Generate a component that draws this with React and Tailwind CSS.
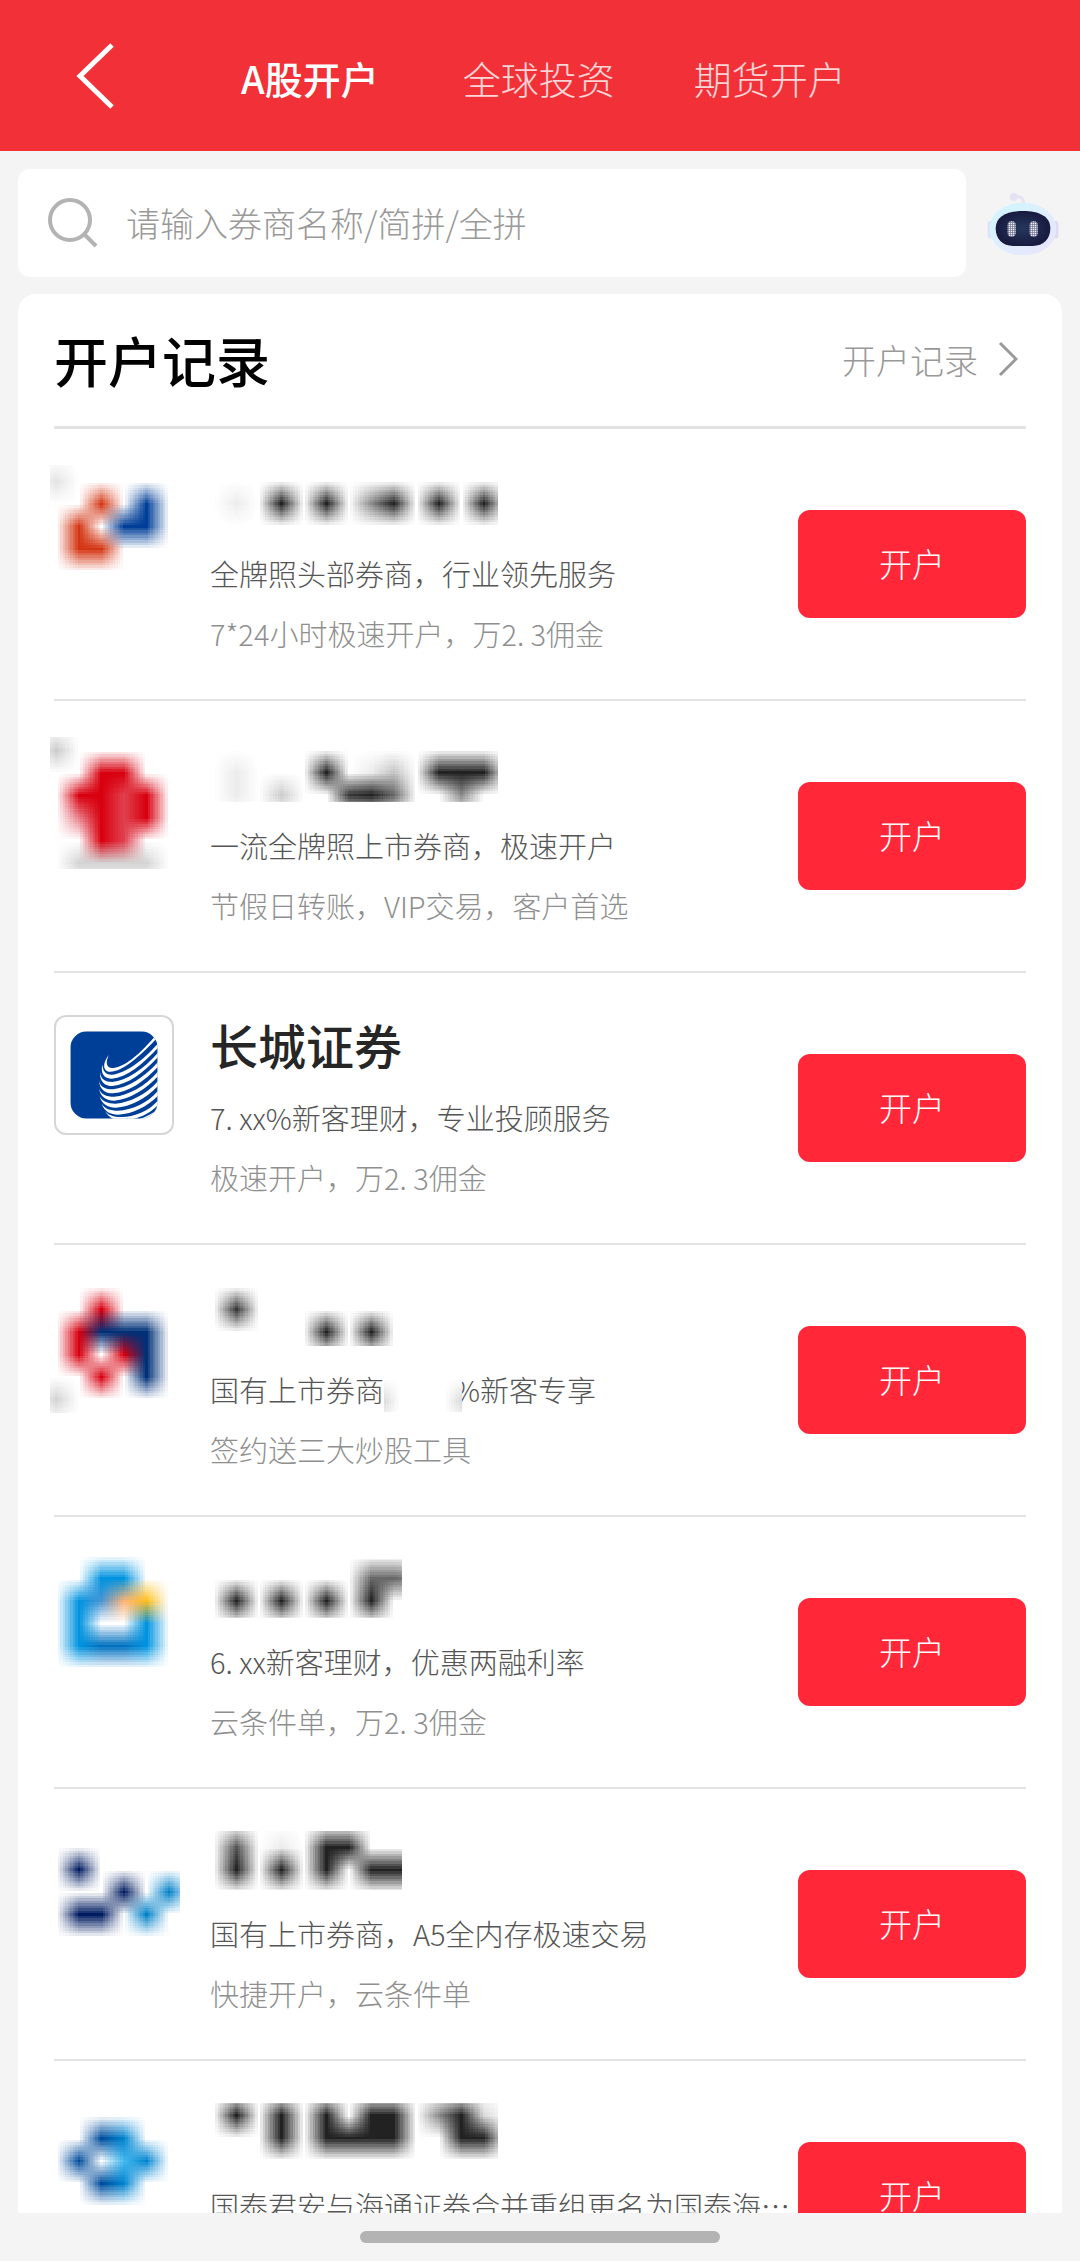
import { useState } from 'react';

const TABS = ['A股开户', '全球投资', '期货开户'];

const INK = {
  k: '#222222', 3: '#383838', 5: '#555555', 6: '#686868', 8: '#8c8c8c',
  b: '#c4c4c4', c: '#cccccc', d: '#dadada', e: '#ececec',
};

// Every broker has a logo and a name; hidden ones are drawn as coarse mosaic cells.
const BROKERS = [
  {
    id: 1,
    logo: {
      top: 5,
      rows: ['e.....', '..r.b.', '.r.bb.', '.rr...'],
      palette: { e: '#e4e4e4', r: '#d43614', b: '#003f98' },
    },
    name: { top: 21, chars: 6, rows: ['e.k.k.8k.k.k'] },
    intro: '全牌照头部券商，行业领先服务',
    note: '7*24小时极速开户，万2. 3佣金',
  },
  {
    id: 2,
    logo: {
      top: 2,
      rows: ['c.....', '..rr..', '.rrpr.', '.qrpr.', '..rp..', '.dddd.'],
      palette: { c: '#cccccc', d: '#d4d4d4', r: '#d8000f', p: '#e0404e', q: '#e8808a' },
    },
    name: { top: 18, chars: 6, rows: ['e...k.eb.kkk', 'e.c..3k6..8.'] },
    intro: '一流全牌照上市券商，极速开户',
    note: '节假日转账，VIP交易，客户首选',
  },
  {
    id: 3,
    title: '长城证券',
    intro: '7. xx%新客理财，专业投顾服务',
    note: '极速开户，万2. 3佣金',
  },
  {
    id: 4,
    logo: {
      top: 17,
      rows: ['..r...', '.rnnn.', '.r.rn.', '..r.n.', 'd.....'],
      palette: { d: '#d4d4d4', r: '#d8000f', n: '#003078' },
    },
    name: { top: 11, chars: 4, rows: ['3........', '....k.k..'] },
    intro: '国有上市券商',
    introEnd: '%新客专享',
    note: '签约送三大炒股工具',
  },
  {
    id: 5,
    logo: {
      top: 14,
      rows: ['..bb..', '.bmoy.', '.b..b.', '.bddb.'],
      palette: { b: '#0094e0', m: '#4a94d4', o: '#ffb478', y: '#ffbe1c', d: '#0070c0' },
    },
    name: { top: 8, chars: 4, rows: ['......668', 'k.k.k.k..'] },
    intro: '6. xx新客理财，优惠两融利率',
    note: '云条件单，万2. 3佣金',
  },
  {
    id: 6,
    logo: {
      top: 33,
      rows: ['.n....', '...n.l', '.nn.l.'],
      palette: { n: '#001c60', l: '#0080c8' },
    },
    name: { top: 5, chars: 4, rows: ['5.e.kk...', 'k.k.k.kkk'] },
    intro: '国有上市券商，A5全内存极速交易',
    note: '快捷开户，云条件单',
  },
  {
    id: 7,
    logo: {
      top: 30,
      rows: ['..nb..', '.n.lb.', '..nb..'],
      palette: { n: '#004c9c', b: '#0084d0', l: '#45baf0' },
    },
    name: { top: 1, chars: 6, rows: ['k.k.k.kk.8kd', '..k.kkkk..kk'] },
    intro: '国泰君安与海通证券合并重组更名为国泰海通证券股份有限公司',
    note: '极速开户，万2. 3佣金',
  },
];

const CELL = 22.5;
const STEPS = 9;

const toRgb = (hex) => [1, 3, 5].map((i) => parseInt(hex.slice(i, i + 2), 16));

// Blends the four nearest cells, so the mosaic fades smoothly between their centres.
const blend = (rows, palette, x, y) => {
  const x0 = Math.floor(x);
  const y0 = Math.floor(y);
  const fx = x - x0;
  const fy = y - y0;
  const cell = (cx, cy) => toRgb(palette[rows[cy]?.[cx]] || '#ffffff');
  const a = cell(x0, y0);
  const b = cell(x0 + 1, y0);
  const c = cell(x0, y0 + 1);
  const d = cell(x0 + 1, y0 + 1);
  return a.map((_, i) =>
    Math.round((a[i] * (1 - fx) + b[i] * fx) * (1 - fy) + (c[i] * (1 - fx) + d[i] * fx) * fy)
  );
};

const Mosaic = ({ rows, palette, left, top, width, height, className }) => {
  const size = CELL / STEPS;
  const tiles = [];

  for (let j = -STEPS; j < (rows.length + 1) * STEPS; j++) {
    for (let i = -STEPS; i < (rows[0].length + 1) * STEPS; i++) {
      const rgb = blend(rows, palette, (i + 0.5) / STEPS - 0.5, (j + 0.5) / STEPS - 0.5);
      if (Math.min(...rgb) < 254) {
        tiles.push(
          <rect
            key={`${i}-${j}`}
            x={left + i * size}
            y={top + j * size}
            width={size}
            height={size}
            fill={`rgb(${rgb.join(',')})`}
          />
        );
      }
    }
  }

  return (
    <svg
      className={className}
      width={width}
      height={height}
      viewBox={`0 0 ${width} ${height}`}
      shapeRendering="crispEdges"
      aria-hidden="true"
    >
      {tiles}
    </svg>
  );
};

const GreatWallLogo = () => (
  <svg className="w-[88px] h-[88px]" viewBox="91 91 264 264" aria-hidden="true">
    <clipPath id="wall-tile">
      <rect x="92" y="92" width="262" height="262" rx="50" />
    </clipPath>
    <g clipPath="url(#wall-tile)">
      <rect x="92" y="92" width="262" height="262" fill="#003f98" />
      <g fill="#ffffff">
        <path d="M208 162C192 182 186 206 206 213C244 218 300 168 356 108V94C300 164 250 202 216 202C198 200 198 182 208 162Z" />
        <path d="M188 192C182 220 194 234 216 234C262 230 310 190 356 140V127C312 178 258 218 216 222C198 222 190 212 188 192Z" />
        <path d="M181 215C180 244 196 256 218 256C264 252 312 216 356 168V155C314 204 260 240 218 244C196 244 184 236 181 215Z" />
        <path d="M178 240C180 266 196 278 220 278C268 274 314 242 356 197V183C316 230 262 262 220 266C196 266 182 258 178 240Z" />
        <path d="M178 264C182 288 200 300 224 300C270 296 316 268 356 226V211C318 256 266 284 224 288C198 288 184 280 178 264Z" />
        <path d="M180 287C186 310 204 321 228 321C274 318 318 294 356 255V240C320 282 270 306 228 309C202 309 188 302 180 287Z" />
        <path d="M186 309C194 332 212 342 236 342C280 339 322 318 356 284V269C324 308 276 328 236 330C210 330 196 324 186 309Z" />
        <path d="M196 331C206 350 224 360 246 360C288 358 328 342 356 312V298C328 332 284 348 246 349C220 349 206 344 196 331Z" />
        <path d="M290 358C318 350 340 338 356 325V358Z" />
      </g>
    </g>
  </svg>
);

const Robot = () => (
  <svg className="w-[72px] h-[64px]" viewBox="0 0 216 192" aria-hidden="true">
    <defs>
      <linearGradient id="robot-shell" x1="0" y1="0" x2="1" y2="1">
        <stop offset="0" stopColor="#ccf6ff" />
        <stop offset="0.5" stopColor="#dfeeff" />
        <stop offset="1" stopColor="#eae2fb" />
      </linearGradient>
      <radialGradient id="robot-face">
        <stop offset="0" stopColor="#24385c" />
        <stop offset="1" stopColor="#191a40" />
      </radialGradient>
      <pattern id="robot-eye" width="6" height="6" patternUnits="userSpaceOnUse">
        <rect width="6" height="6" fill="#6d7090" />
        <rect width="4" height="4" fill="#f2f2f7" />
      </pattern>
    </defs>
    <path d="M80 18C100 12 110 22 110 40" fill="none" stroke="#e4e2f3" strokeWidth="9" />
    <circle cx="80" cy="18" r="12" fill="#e4e2f3" />
    <rect x="2" y="90" width="20" height="52" rx="8" fill="#dde2f6" />
    <rect x="194" y="90" width="20" height="52" rx="8" fill="#dcdaf5" />
    <rect x="8" y="36" width="200" height="156" rx="94" ry="76" fill="url(#robot-shell)" />
    <path
      d="M108 60C156 60 190 76 190 112C190 146 168 165 138 165H78C48 165 26 146 26 112C26 76 60 60 108 60Z"
      fill="url(#robot-face)"
    />
    <rect x="62" y="91" width="24" height="46" rx="11" fill="url(#robot-eye)" />
    <rect x="128" y="91" width="24" height="46" rx="11" fill="url(#robot-eye)" />
  </svg>
);

const BrokerRow = ({ broker }) => (
  <li className="flex items-start h-[272px] border-b-2 border-[#e3e3e3]">
    <div className="w-[156px] shrink-0">
      {broker.logo ? (
        <Mosaic
          className="mt-9 -ml-1"
          rows={broker.logo.rows}
          palette={broker.logo.palette}
          left={-5}
          top={broker.logo.top}
          width={130}
          height={132}
        />
      ) : (
        <div className="mt-[42px] w-[120px] h-[120px] flex items-center justify-center rounded-xl border-2 border-[#d6d6d6]">
          <GreatWallLogo />
        </div>
      )}
    </div>

    <div className="flex-1 min-w-0 pt-[42px]">
      <h3 className="h-[60px] mb-3 text-[48px] leading-[58px] font-medium text-[#262626]">
        {broker.title || (
          <Mosaic
            rows={broker.name.rows}
            palette={INK}
            left={15}
            top={broker.name.top}
            width={broker.name.chars * 48}
            height={59}
          />
        )}
      </h3>
      <p className="text-[29px] leading-[60px] text-[#555555] truncate">
        {broker.intro}
        {broker.introEnd && (
          <>
            <Mosaic
              className="relative inline-block align-middle -mr-2 bg-white"
              rows={['d...d']}
              palette={{ d: '#cccccc' }}
              left={-18}
              top={14}
              width={78}
              height={36}
            />
            {broker.introEnd}
          </>
        )}
      </p>
      <p className="text-[29px] leading-[60px] text-[#8f8f8f] truncate">{broker.note}</p>
    </div>

    <button
      type="button"
      className="mt-[81px] w-[228px] h-[108px] shrink-0 rounded-xl bg-[#ff2738] text-[33px] text-white"
    >
      开户
    </button>
  </li>
);

const App = () => {
  const [activeTab, setActiveTab] = useState(TABS[0]);
  const [keyword, setKeyword] = useState('');

  return (
    <div
      lang="zh-CN"
      className="flex flex-col h-screen overflow-hidden bg-[#f4f4f4] font-light font-['Noto_Sans_CJK_SC',sans-serif]"
    >
      {/* Header */}
      <header className="flex items-center h-[151px] shrink-0 pl-[75px] bg-[#f23038]">
        <button type="button" aria-label="返回" className="mr-[121px]">
          <svg className="w-10 h-[68px]" viewBox="0 0 40 68" fill="none" stroke="#ffffff" strokeWidth="5">
            <path d="M37 3L5 34L37 65" />
          </svg>
        </button>
        <nav className="flex gap-[79px] pt-1">
          {TABS.map((tab) => (
            <button
              key={tab}
              type="button"
              onClick={() => setActiveTab(tab)}
              className={
                tab === activeTab
                  ? 'px-[5px] text-[38px] font-medium text-white'
                  : 'text-[38px] text-white/80'
              }
            >
              {tab}
            </button>
          ))}
        </nav>
      </header>

      {/* Search */}
      <div className="flex items-center shrink-0 pt-[18px] pl-[18px]">
        <label className="flex-1 min-w-0 h-[108px] flex items-center pl-[30px] rounded-xl bg-white">
          <svg className="w-[50px] h-[50px] shrink-0" viewBox="0 0 50 50" fill="none" stroke="#b3b3b3" strokeWidth="4">
            <circle cx="22" cy="22" r="20" />
            <path d="M37 37L48 48" />
          </svg>
          <input
            type="text"
            aria-label="搜索券商"
            value={keyword}
            onChange={(e) => setKeyword(e.target.value)}
            placeholder="请输入券商名称/简拼/全拼"
            className="flex-1 min-w-0 h-full ml-7 pb-0.5 bg-transparent text-[34px] outline-none placeholder:text-[#999999]"
          />
        </label>
        <button type="button" aria-label="智能客服" className="w-[114px] flex justify-center">
          <Robot />
        </button>
      </div>

      {/* Broker list */}
      <main className="flex-1 min-h-0 overflow-hidden mt-[17px] mx-[18px] px-9 rounded-t-[18px] bg-white">
        <div className="flex items-center justify-between h-[135px] pb-0.5 border-b-3 border-[#e3e3e3]">
          <h2 className="text-[54px] font-medium text-black">开户记录</h2>
          <a href="#records" className="flex items-center gap-5 pr-2 text-[34px] text-[#999999]">
            开户记录
            <svg className="w-5 h-9" viewBox="0 0 20 36" fill="none" stroke="#999999" strokeWidth="3">
              <path d="M2 2L18 18L2 34" />
            </svg>
          </a>
        </div>
        <ul>
          {BROKERS.map((broker) => (
            <BrokerRow key={broker.id} broker={broker} />
          ))}
        </ul>
      </main>

      <footer className="h-12 shrink-0 flex items-center justify-center">
        <div className="w-1/3 h-3 rounded-full bg-[#b3b3b3]" />
      </footer>
    </div>
  );
};

export default App;
